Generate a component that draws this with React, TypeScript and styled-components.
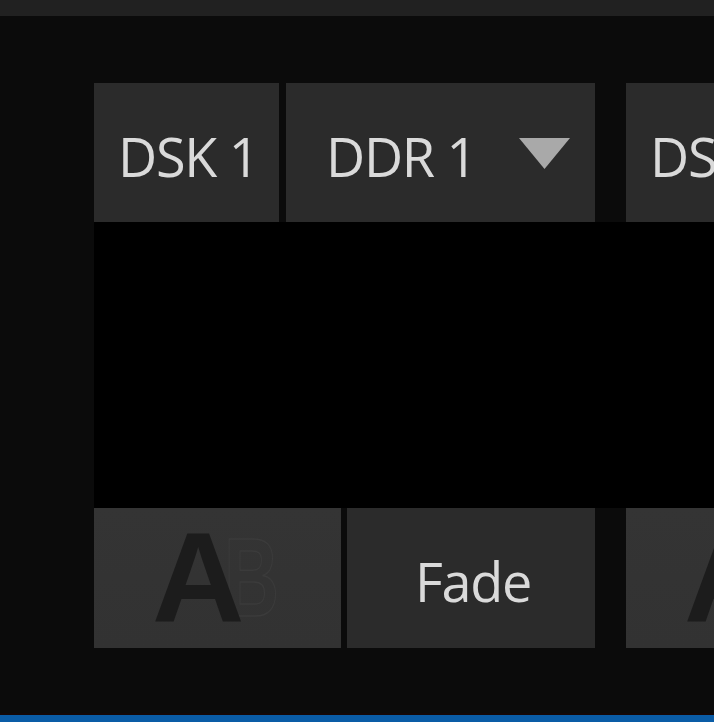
import React from "react";
import styled, { createGlobalStyle } from "styled-components";

const Global = createGlobalStyle`
  html, body { margin: 0; padding: 0; background: #0b0b0b; overflow: hidden; }
  #root { width: 714px; height: 722px; }
`;

const Window = styled.div`
  width: 714px;
  height: 722px;
  display: flex;
  flex-direction: column;
  background: #0b0b0b;
  font-family: "Open Sans", "Noto Sans", sans-serif;
  overflow: hidden;
`;

const TitleBar = styled.div`
  height: 16px;
  flex: none;
  background: #212121;
`;

const Main = styled.div`
  flex: 1;
  display: flex;
  min-height: 0;
`;

const SideColumn = styled.div`
  width: 94px;
  flex: none;
  background: #0b0b0b;
`;

const Panel = styled.div`
  flex: 1;
  display: flex;
  flex-direction: column;
  padding-top: 67px;
  overflow: hidden;
`;

const Row = styled.div<{ $h: number }>`
  height: ${(p) => p.$h}px;
  flex: none;
  display: flex;
  gap: 31px;
`;

const Group = styled.div<{ $gap: number }>`
  width: 501px;
  flex: none;
  display: flex;
  gap: ${(p) => p.$gap}px;
`;

const Button = styled.div<{ $w: number; $light?: boolean }>`
  width: ${(p) => p.$w}px;
  flex: none;
  position: relative;
  display: flex;
  align-items: center;
  background: ${(p) => (p.$light ? "linear-gradient(180deg, #343434 0%, #323232 100%)" : "#2b2b2b")};
  color: #dadada;
  overflow: hidden;
`;

const Label = styled.span<{ $pl: number; $dy: number }>`
  padding-left: ${(p) => p.$pl}px;
  font-size: 54px;
  line-height: 1;
  letter-spacing: -1.3px;
  white-space: nowrap;
  transform: translateY(${(p) => p.$dy}px);
`;

const Caret = styled.svg`
  position: absolute;
  left: 233px;
  top: 55px;
  width: 51px;
  height: 31px;
`;

const Preview = styled.div`
  height: 286px;
  flex: none;
  background: #000;
`;

const ABIcon = styled.div`
  position: absolute;
  left: 58px;
  top: 6px;
  width: 140px;
  height: 120px;
`;

const LetterA = styled.span`
  position: absolute;
  left: 0;
  top: 0;
  font-family: "Liberation Sans", Arial, sans-serif;
  font-weight: 700;
  font-size: 128px;
  line-height: 1;
  color: #1c1c1c;
`;

const LetterB = styled.span`
  position: absolute;
  left: 72px;
  top: 8px;
  font-family: "Liberation Sans", Arial, sans-serif;
  font-weight: 700;
  font-size: 112px;
  line-height: 1;
  color: transparent;
  -webkit-text-stroke: 1.5px #3b3b3b;
  transform: scaleX(0.68);
  transform-origin: left top;
`;

const Footer = styled.div`
  flex: 1;
`;

const StatusBar = styled.div`
  height: 7px;
  flex: none;
  border-top: 2px solid #140808;
  background: #0a5ca6;
`;

function TopGroup({ dsk, ddr }: { dsk: string; ddr: string }) {
  return (
    <Group $gap={7}>
      <Button $w={185}>
        <Label $pl={24} $dy={3}>{dsk}</Label>
      </Button>
      <Button $w={309}>
        <Label $pl={40} $dy={3}>{ddr}</Label>
        <Caret viewBox="0 0 51 31">
          <polygon points="0,0 51,0 25.5,31" fill="#a9a9a9" />
        </Caret>
      </Button>
    </Group>
  );
}

function BottomGroup() {
  return (
    <Group $gap={6}>
      <Button $w={247} $light>
        <ABIcon>
          <LetterB>B</LetterB>
          <LetterA>A</LetterA>
        </ABIcon>
      </Button>
      <Button $w={248}>
        <Label $pl={68} $dy={3}>Fade</Label>
      </Button>
    </Group>
  );
}

export default function App() {
  return (
    <>
      <Global />
      <Window>
        <TitleBar />
        <Main>
          <SideColumn />
          <Panel>
            <Row $h={139}>
              <TopGroup dsk="DSK 1" ddr="DDR 1" />
              <TopGroup dsk="DSK 2" ddr="DDR 2" />
            </Row>
            <Preview />
            <Row $h={140}>
              <BottomGroup />
              <BottomGroup />
            </Row>
            <Footer />
          </Panel>
        </Main>
        <StatusBar />
      </Window>
    </>
  );
}
